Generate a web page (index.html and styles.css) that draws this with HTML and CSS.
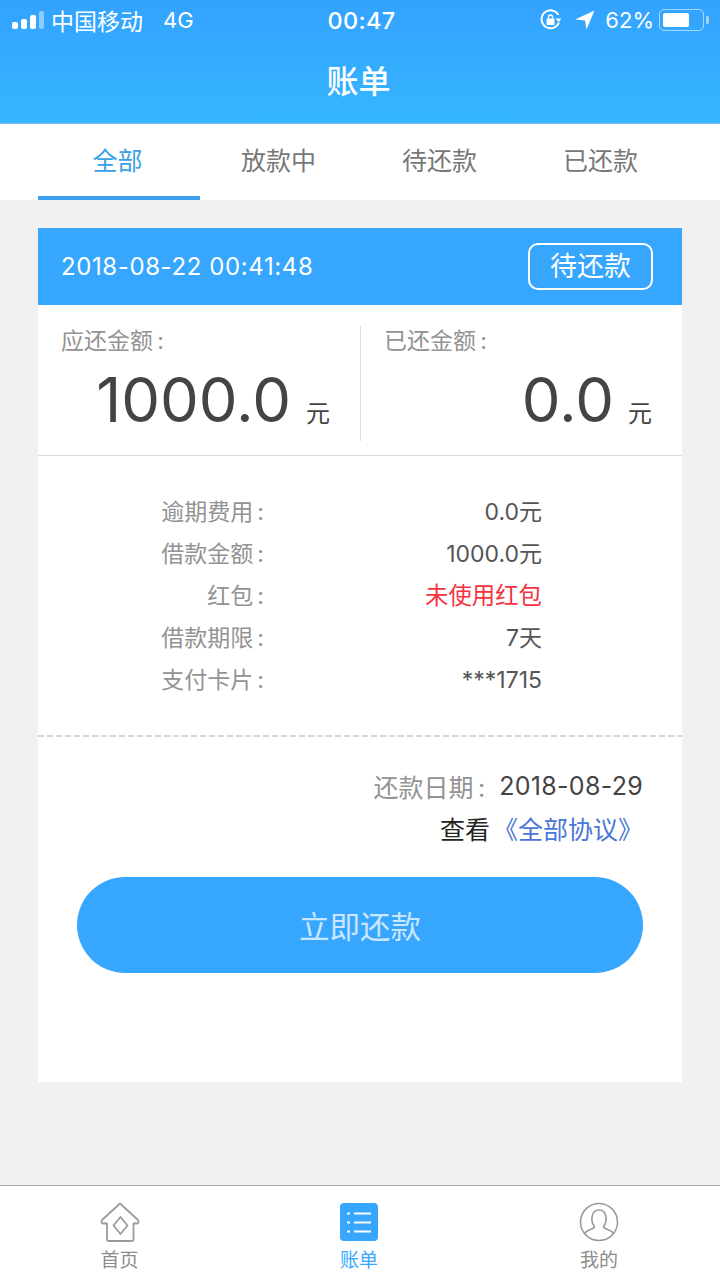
FILE: index.html
```html
<!DOCTYPE html>
<html lang="zh-CN">
<head>
  <meta charset="UTF-8" />
  <title>账单</title>
  <meta name="viewport" content="width=device-width, initial-scale=1" />
  <link rel="stylesheet" href="styles.css">
</head>
<body>

  <header class="header">
    <div class="status">
      <div class="status-left">
        <svg class="signal" width="32" height="20" viewBox="0 0 32 20">
          <rect x="0" y="12" width="6" height="7" rx="2" fill="#fff"/>
          <rect x="9" y="9" width="6" height="10" rx="2" fill="#fff"/>
          <rect x="18" y="5" width="6" height="14" rx="2" fill="#fff"/>
          <rect x="27" y="1" width="5" height="18" rx="2" fill="#fff" opacity="0.45"/>
        </svg>
        <span>中国移动</span>
        <span class="net">4G</span>
      </div>
      <div class="status-time">00:47</div>
      <div class="status-right">
        <svg width="24" height="24" viewBox="0 0 24 24">
          <path d="M20 14.500A9 9 0 1 1 19.500 7" fill="none" stroke="#fff" stroke-width="2"/>
          <path d="M16.500 10.500h6l-3 3.500z" fill="#fff"/>
          <rect x="7.500" y="10.500" width="8" height="6.500" rx="1" fill="#fff"/>
          <path d="M9.500 10.500V9a2 2 0 0 1 4 0v1.500" fill="none" stroke="#fff" stroke-width="1.400"/>
        </svg>
        <svg class="arrow" width="20" height="20" viewBox="0 0 20 20">
          <path d="M0 9.500L19.500 0.500L11.500 19.500L10 10.500z" fill="#fff"/>
        </svg>
        <span class="percent">62%</span>
        <div class="battery"><div class="battery-fill"></div></div>
        <div class="battery-tip"></div>
      </div>
    </div>
    <h1 class="title">账单</h1>
  </header>

  <nav class="tabs">
    <div class="tab active">全部</div>
    <div class="tab">放款中</div>
    <div class="tab">待还款</div>
    <div class="tab">已还款</div>
  </nav>

  <main class="main">
    <section class="card">
      <div class="card-head">
        <span class="card-date">2018-08-22 00:41:48</span>
        <span class="badge">待还款</span>
      </div>

      <div class="amounts">
        <div class="amount">
          <div class="amount-label">应还金额&thinsp;:</div>
          <div class="amount-value"><b>1000.0</b><span>元</span></div>
        </div>
        <div class="amount">
          <div class="amount-label">已还金额&thinsp;:</div>
          <div class="amount-value"><b>0.0</b><span>元</span></div>
        </div>
      </div>

      <div class="details">
        <div class="row"><span class="row-label">逾期费用&thinsp;:</span><span class="row-value">0.0元</span></div>
        <div class="row"><span class="row-label">借款金额&thinsp;:</span><span class="row-value">1000.0元</span></div>
        <div class="row"><span class="row-label">红包&thinsp;:</span><span class="row-value red">未使用红包</span></div>
        <div class="row"><span class="row-label">借款期限&thinsp;:</span><span class="row-value">7天</span></div>
        <div class="row"><span class="row-label">支付卡片&thinsp;:</span><span class="row-value">***1715</span></div>
      </div>
      <div class="dash"></div>

      <div class="foot">
        <div class="due"><span class="due-label">还款日期&thinsp;:</span><span class="due-date">2018-08-29</span></div>
        <div class="agree">查看<a class="agree-link">《全部协议》</a></div>
        <button class="pay">立即还款</button>
      </div>
    </section>
  </main>

  <footer class="tabbar">
    <div class="tabbar-item">
      <svg width="40" height="40" viewBox="0 0 40 40">
        <path d="M20 1.500L38 18Q39.500 21 37 21.500H33.500V37.500a1.500 1.500 0 0 1-1.500 1.500H8.500A1.500 1.500 0 0 1 7 37.500V21.500H3Q0.500 21 2 18z" fill="none" stroke="#9b9b9b" stroke-width="1.800" stroke-linejoin="round"/>
        <path d="M20.500 15L27.500 23.500L20.500 32L13.500 23.500z" fill="none" stroke="#9b9b9b" stroke-width="1.800" stroke-linejoin="round"/>
      </svg>
      <span>首页</span>
    </div>
    <div class="tabbar-item on">
      <svg width="40" height="40" viewBox="0 0 40 40">
        <rect x="1" y="1" width="38" height="38" rx="4" fill="#36a6ff"/>
        <path d="M8 11.500h3M15 11.500h17M8 20.500h3M15 20.500h17M8 29.500h3M15 29.500h17" stroke="#fff" stroke-width="2" fill="none"/>
      </svg>
      <span>账单</span>
    </div>
    <div class="tabbar-item">
      <svg width="40" height="40" viewBox="0 0 40 40">
        <circle cx="20" cy="20" r="18.500" fill="none" stroke="#9b9b9b" stroke-width="1.600"/>
        <path d="M5.500 31.500C8 27.500 15 27.500 15.500 24.500C11.500 20 11.500 8 20 8C28.500 8 28.500 20 24.500 24.500C25 27.500 32 27.500 34.500 31.500" fill="none" stroke="#9b9b9b" stroke-width="1.600"/>
      </svg>
      <span>我的</span>
    </div>
  </footer>

</body>
</html>
```

FILE: styles.css
```css
* {
  box-sizing: border-box;
}
html, body {
  margin: 0;
  height: 100%;
}
body {
  width: 720px;
  height: 1280px;
  display: flex;
  flex-direction: column;
  overflow: hidden;
  background: #f1f1f1;
  font-family: Inter, "Noto Sans CJK SC", sans-serif;
  color: #444;
}

/* top blue area */
.header {
  height: 124px;
  background: linear-gradient(180deg, #33a2ff, #36b6ff);
  border-bottom: 1px solid #7cbfe6;
  color: white;
  flex-shrink: 0;
}
.status {
  height: 40px;
  display: flex;
  align-items: center;
  justify-content: space-between;
  padding: 0 11px 0 12px;
  font-size: 23px;
  position: relative;
}
.status-left, .status-right {
  display: flex;
  align-items: center;
}
.signal {
  margin-right: 7px;
}
.net {
  margin-left: 20px;
  font-size: 22px;
}
.status-time {
  position: absolute;
  left: 3px;
  right: 0;
  text-align: center;
  font-weight: 500;
  font-size: 23.5px;
  letter-spacing: 0.3px;
}
.arrow {
  margin: 0 10px 0 12px;
}
.percent {
  font-size: 22px;
}
.battery {
  width: 45px;
  height: 22px;
  margin-left: 5px;
  padding: 3px;
  border: 1.500px solid rgba(255, 255, 255, 0.55);
  border-radius: 5px;
}
.battery-fill {
  width: 26px;
  height: 100%;
  background: white;
  border-radius: 2px;
}
.battery-tip {
  width: 3px;
  height: 8px;
  margin-left: 2px;
  background: rgba(255, 255, 255, 0.55);
  border-radius: 0 2px 2px 0;
}
.title {
  margin: 0;
  height: 83px;
  padding-right: 3px;
  line-height: 83px;
  text-align: center;
  font-size: 32px;
  font-weight: 500;
}

/* tabs */
.tabs {
  height: 76px;
  display: grid;
  grid-template-columns: repeat(4, 1fr);
  grid-template-rows: 76px;
  padding: 0 38px;
  background: white;
  flex-shrink: 0;
}
.tab {
  line-height: 74px;
  text-align: center;
  text-indent: -2px;
  font-size: 25px;
  color: #777;
}
.tab.active {
  margin-right: -1px;
  padding-right: 1px;
  color: #3aa0e8;
  border-bottom: 4px solid #3a9fee;
}

/* card */
.main {
  flex: 1;
  padding: 28px 38px 0;
}
.card {
  height: 854px;
  background: white;
}
.card-head {
  height: 77px;
  display: flex;
  align-items: center;
  justify-content: space-between;
  padding: 0 29px 0 23px;
  background: #36a6ff;
  color: white;
}
.card-date {
  font-size: 24px;
  letter-spacing: 0.6px;
}
.badge {
  width: 125px;
  height: 47px;
  line-height: 43px;
  text-align: center;
  border: 2px solid white;
  border-radius: 10px;
  font-size: 27px;
}
.amounts {
  height: 151px;
  display: grid;
  grid-template-columns: 323px 1fr;
  padding-top: 21px;
  border-bottom: 1px solid #ddd;
}
.amount {
  height: 115px;
  padding: 0 30px 0 23px;
}
.amount:first-child {
  border-right: 1px solid #ddd;
}
.amount-label {
  line-height: 30px;
  font-size: 23px;
  color: #939393;
}
.amount-value {
  display: flex;
  align-items: baseline;
  justify-content: flex-end;
  margin-top: 2px;
}
.amount-value b {
  font-size: 61.5px;
  font-weight: 400;
  line-height: 84px;
}
.amount-value span {
  margin-left: 14px;
  font-size: 24px;
}
.amount:first-child .amount-value span {
  margin-left: 15px;
}

/* detail rows */
.details {
  height: 279px;
  padding-top: 35px;
}
.row {
  height: 42px;
  display: grid;
  grid-template-columns: 226px 278px;
  line-height: 42px;
  font-size: 23px;
}
.row-label {
  text-align: right;
  color: #939393;
}
.row-value {
  text-align: right;
  color: #555;
}
.row-value.red {
  font-size: 23.4px;
  color: #f5333f;
}
.dash {
  height: 2px;
  background: repeating-linear-gradient(90deg, #d6d6d6 0, #d6d6d6 6px, transparent 6px, transparent 9px);
}

/* date, link and pay button */
.foot {
  padding: 27px 39px 0;
}
.due {
  display: flex;
  justify-content: flex-end;
  align-items: center;
  height: 44px;
  font-size: 25px;
}
.due-label {
  color: #939393;
}
.due-date {
  margin-left: 14px;
  letter-spacing: 0.3px;
}
.agree {
  height: 44px;
  line-height: 44px;
  text-align: right;
  font-size: 25px;
  color: #222;
}
.agree-link {
  margin-left: 3px;
  color: #4a76d6;
}
.pay {
  display: block;
  width: 100%;
  height: 96px;
  margin-top: 25px;
  border: none;
  border-radius: 48px;
  background: #36a6ff;
  color: #cbe7ff;
  font-family: inherit;
  font-size: 30.5px;
}

/* bottom bar */
.tabbar {
  height: 95px;
  display: grid;
  grid-template-columns: 239px 240px 240px;
  background: white;
  border-top: 1px solid #aaa;
  flex-shrink: 0;
}
.tabbar-item {
  display: flex;
  flex-direction: column;
  align-items: center;
  padding-top: 16px;
  font-size: 19px;
  line-height: 30px;
  color: #8c8c8c;
}
.tabbar-item span {
  margin-top: 4px;
}
.tabbar-item.on {
  color: #36a6ff;
}
```
